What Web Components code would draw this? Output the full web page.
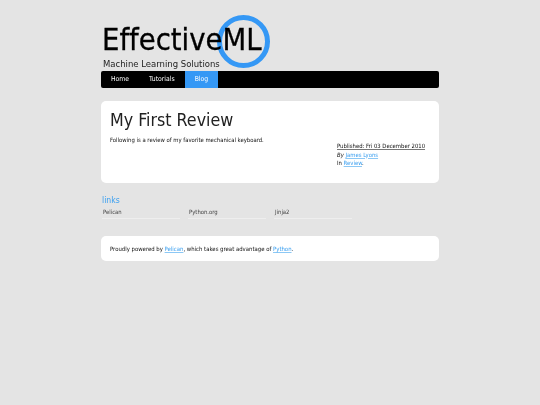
<!DOCTYPE html>
<html>
<head>
<meta charset="utf-8">
<style>
    html, body { margin: 0; padding: 0; }
    body {
        background: #e4e4e4;
        font-family: "DejaVu Sans Condensed", "DejaVu Sans", sans-serif;
        font-stretch: condensed;
        font-variant-ligatures: none;
        color: #222;
        height: 405px;
        overflow: hidden;
    }
    #page { width: 338px; margin: 0 auto; padding-top: 15px; will-change: transform; }
</style>
</head>
<body>
<div id="page">
    <site-banner></site-banner>
    <site-nav>
        <a href="#">Home</a>
        <a href="#">Tutorials</a>
        <a href="#" class="active">Blog</a>
    </site-nav>
    <review-article></review-article>
    <link-roll></link-roll>
    <site-footer></site-footer>
</div>
<script>
class SiteBanner extends HTMLElement {
    constructor() {
        super();
        this.attachShadow({ mode: "open" });
        this.shadowRoot.innerHTML = `
        <style>
            :host { display: block; height: 56px; position: relative; }
            .title {
                display: block;
                padding: 8px 0 0 1px;
                font-size: 30.6px;
                line-height: 33px;
                color: #000;
                -webkit-text-stroke: .3px #000;
                position: relative;
            }
            .sub {
                display: block;
                padding: 1px 0 0 2px;
                font-size: 9.45px;
                line-height: 13px;
                color: #222;
                position: relative;
            }
            svg { position: absolute; left: 116px; top: 0; }
        </style>
        <svg width="54" height="54" viewBox="0 0 54 54">
            <circle cx="26.5" cy="26.5" r="24" fill="none" stroke="#3598f5" stroke-width="5"/>
        </svg>
        <span class="title">EffectiveML</span>
        <span class="sub">Machine Learning Solutions</span>`;
    }
}

class SiteNav extends HTMLElement {
    constructor() {
        super();
        this.attachShadow({ mode: "open" });
        this.shadowRoot.innerHTML = `
        <style>
            :host {
                display: flex;
                height: 17px;
                background: #000;
                border-radius: 2px;
                font-size: 6.8px;
            }
            ::slotted(a) {
                display: block;
                padding: 0 10px;
                line-height: 17px;
                color: #fff;
                text-decoration: none;
            }
            ::slotted(a.active) { background: #3598f5; }
        </style>
        <slot></slot>`;
    }
}

class ReviewArticle extends HTMLElement {
    constructor() {
        super();
        this.attachShadow({ mode: "open" });
        this.shadowRoot.innerHTML = `
        <style>
            :host {
                display: block;
                margin-top: 13px;
                height: 82px;
                box-sizing: border-box;
                padding: 8px 9px;
                background: #fff;
                border-radius: 5px;
                color: #111;
            }
            h1 { margin: 0; font-size: 17.7px; line-height: 22px; font-weight: normal; color: #222; }
            .columns { display: flex; justify-content: space-between; }
            p { margin: 5px 0 0; font-size: 5.9px; line-height: 9px; }
            footer { width: 93px; margin-top: 11px; font-size: 5.9px; line-height: 8.7px; }
            .date { text-decoration: underline; text-decoration-color: #777; }
            a { color: #3a9ff0; text-decoration-color: #8cc8f5; }
        </style>
        <h1>My First Review</h1>
        <div class="columns">
            <p>Following is a review of my favorite mechanical keyboard.</p>
            <footer>
                <div class="date">Published: Fri 03 December 2010</div>
                <div><i>By</i> <a href="#">James Lyons</a></div>
                <div>In <a href="#">Review</a>.</div>
            </footer>
        </div>`;
    }
}

class LinkRoll extends HTMLElement {
    constructor() {
        super();
        this.attachShadow({ mode: "open" });
        this.shadowRoot.innerHTML = `
        <style>
            :host { display: block; margin-top: 12px; height: 41px; padding-left: 1px; }
            h2 { margin: 0; font-size: 8.6px; line-height: 11px; font-weight: normal; color: #3a9ff0; }
            ul { list-style: none; margin: 2px 0 0; padding: 0; display: flex; gap: 8.5px; }
            li {
                width: 76.5px;
                font-size: 5.9px;
                line-height: 8px;
                padding: 0 0 2px 1px;
                color: #444;
                border-bottom: 1px solid #eee;
            }
        </style>
        <h2>links</h2>
        <ul>
            <li>Pelican</li>
            <li>Python.org</li>
            <li>Jinja2</li>
        </ul>`;
    }
}

class SiteFooter extends HTMLElement {
    constructor() {
        super();
        this.attachShadow({ mode: "open" });
        this.shadowRoot.innerHTML = `
        <style>
            :host {
                display: block;
                height: 25px;
                padding: 0 9px;
                background: #fff;
                border-radius: 5px;
                font-size: 5.95px;
                line-height: 25px;
                color: #111;
            }
            a { color: #3a9ff0; text-decoration-color: #8cc8f5; }
        </style>
        Proudly powered by <a href="#">Pelican</a>, which takes great advantage of <a href="#">Python</a>.`;
    }
}

customElements.define("site-banner", SiteBanner);
customElements.define("site-nav", SiteNav);
customElements.define("review-article", ReviewArticle);
customElements.define("link-roll", LinkRoll);
customElements.define("site-footer", SiteFooter);
</script>
</body>
</html>
